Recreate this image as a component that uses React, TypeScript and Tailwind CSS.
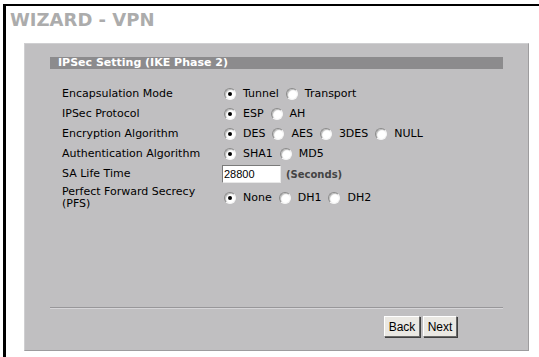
import React from 'react';

const font = { fontFamily: '"DejaVu Sans", Verdana, sans-serif' };

function Radio({ checked }: { checked?: boolean }) {
  return (
    <span className="relative inline-flex h-[12px] w-[12px] shrink-0 items-center justify-center rounded-full border border-t-[#8a8a8a] border-l-[#8a8a8a] border-r-[#f4f4f4] border-b-[#f4f4f4] bg-white shadow-[inset_1px_1px_1px_#b8b8b8]">
      {checked && <span className="h-[4px] w-[4px] rounded-full bg-black" />}
    </span>
  );
}

function Options({ items, selected }: { items: string[]; selected: number }) {
  return (
    <div className="flex items-center pl-[2px]">
      {items.map((label, i) => (
        <label key={label} className="mr-[7px] flex items-center gap-[7px]">
          <Radio checked={i === selected} />
          <span>{label}</span>
        </label>
      ))}
    </div>
  );
}

function Row({ label, children, tall }: { label: React.ReactNode; children: React.ReactNode; tall?: boolean }) {
  return (
    <div className={tall ? 'flex h-[28px] items-center' : 'flex h-[20px] items-center'}>
      <div className="w-[160px] leading-[12px]">{label}</div>
      {children}
    </div>
  );
}

export default function App() {
  return (
    <div className="h-[357px] w-[539px] overflow-hidden bg-white" style={font}>
      <div className="ml-[3px] mt-[4px] h-[400px] w-[600px] border-l-[3px] border-t-[2px] border-black">
        <h1 className="pl-[4px] pt-[3px] text-[18px] font-bold leading-[22px] text-[#acacac]">WIZARD - VPN</h1>

        <div className="ml-[18px] mt-[12px] flex h-[308px] w-[505px] flex-col border border-t-[#cfcfd1] border-l-[#cfcfd1] border-r-[#9d9c9e] border-b-[#9d9c9e] bg-[#c0bfc1] px-[25px] pt-[13px] text-[11px] text-black">
          <div className="h-[12px] bg-[#8c8b8d] pl-[8px] text-[11px] font-bold leading-[12px] text-white">
            IPSec Setting (IKE Phase 2)
          </div>

          <div className="mt-[15px] pl-[12px]">
            <Row label="Encapsulation Mode">
              <Options items={['Tunnel', 'Transport']} selected={0} />
            </Row>
            <Row label="IPSec Protocol">
              <Options items={['ESP', 'AH']} selected={0} />
            </Row>
            <Row label="Encryption Algorithm">
              <Options items={['DES', 'AES', '3DES', 'NULL']} selected={0} />
            </Row>
            <Row label="Authentication Algorithm">
              <Options items={['SHA1', 'MD5']} selected={0} />
            </Row>
            <Row label="SA Life Time">
              <div className="flex items-center">
                <input
                  readOnly
                  value="28800"
                  className="h-[18px] w-[59px] border border-t-[#7a7a7a] border-l-[#7a7a7a] border-r-[#e8e8e8] border-b-[#e8e8e8] bg-white pl-[1px] text-[11px] text-black outline-none"
                  style={{ fontFamily: '"Liberation Sans", Arial, sans-serif' }}
                />
                <span className="ml-[5px] text-[10px] font-bold text-[#444]">(Seconds)</span>
              </div>
            </Row>
            <Row tall label={<>Perfect Forward Secrecy<br />(PFS)</>}>
              <Options items={['None', 'DH1', 'DH2']} selected={0} />
            </Row>
          </div>

          <div className="flex-1" />

          <div className="h-[2px] border-t border-t-[#98979a] border-b border-b-[#d6d5d8]" />

          <div className="mt-[7px] flex justify-end gap-[3px] pb-[13px] pr-[46px]" style={{ fontFamily: '"Liberation Sans", Arial, sans-serif' }}>
            <button className="h-[21px] w-[36px] border border-t-white border-l-white border-r-[#6a6a6a] border-b-[#6a6a6a] bg-[#eae8e3] text-[12px] text-black shadow-[1px_1px_0_#404040]">
              Back
            </button>
            <button className="h-[21px] w-[34px] border border-t-white border-l-white border-r-[#6a6a6a] border-b-[#6a6a6a] bg-[#eae8e3] text-[12px] text-black shadow-[1px_1px_0_#404040]">
              Next
            </button>
          </div>
        </div>
      </div>
    </div>
  );
}
